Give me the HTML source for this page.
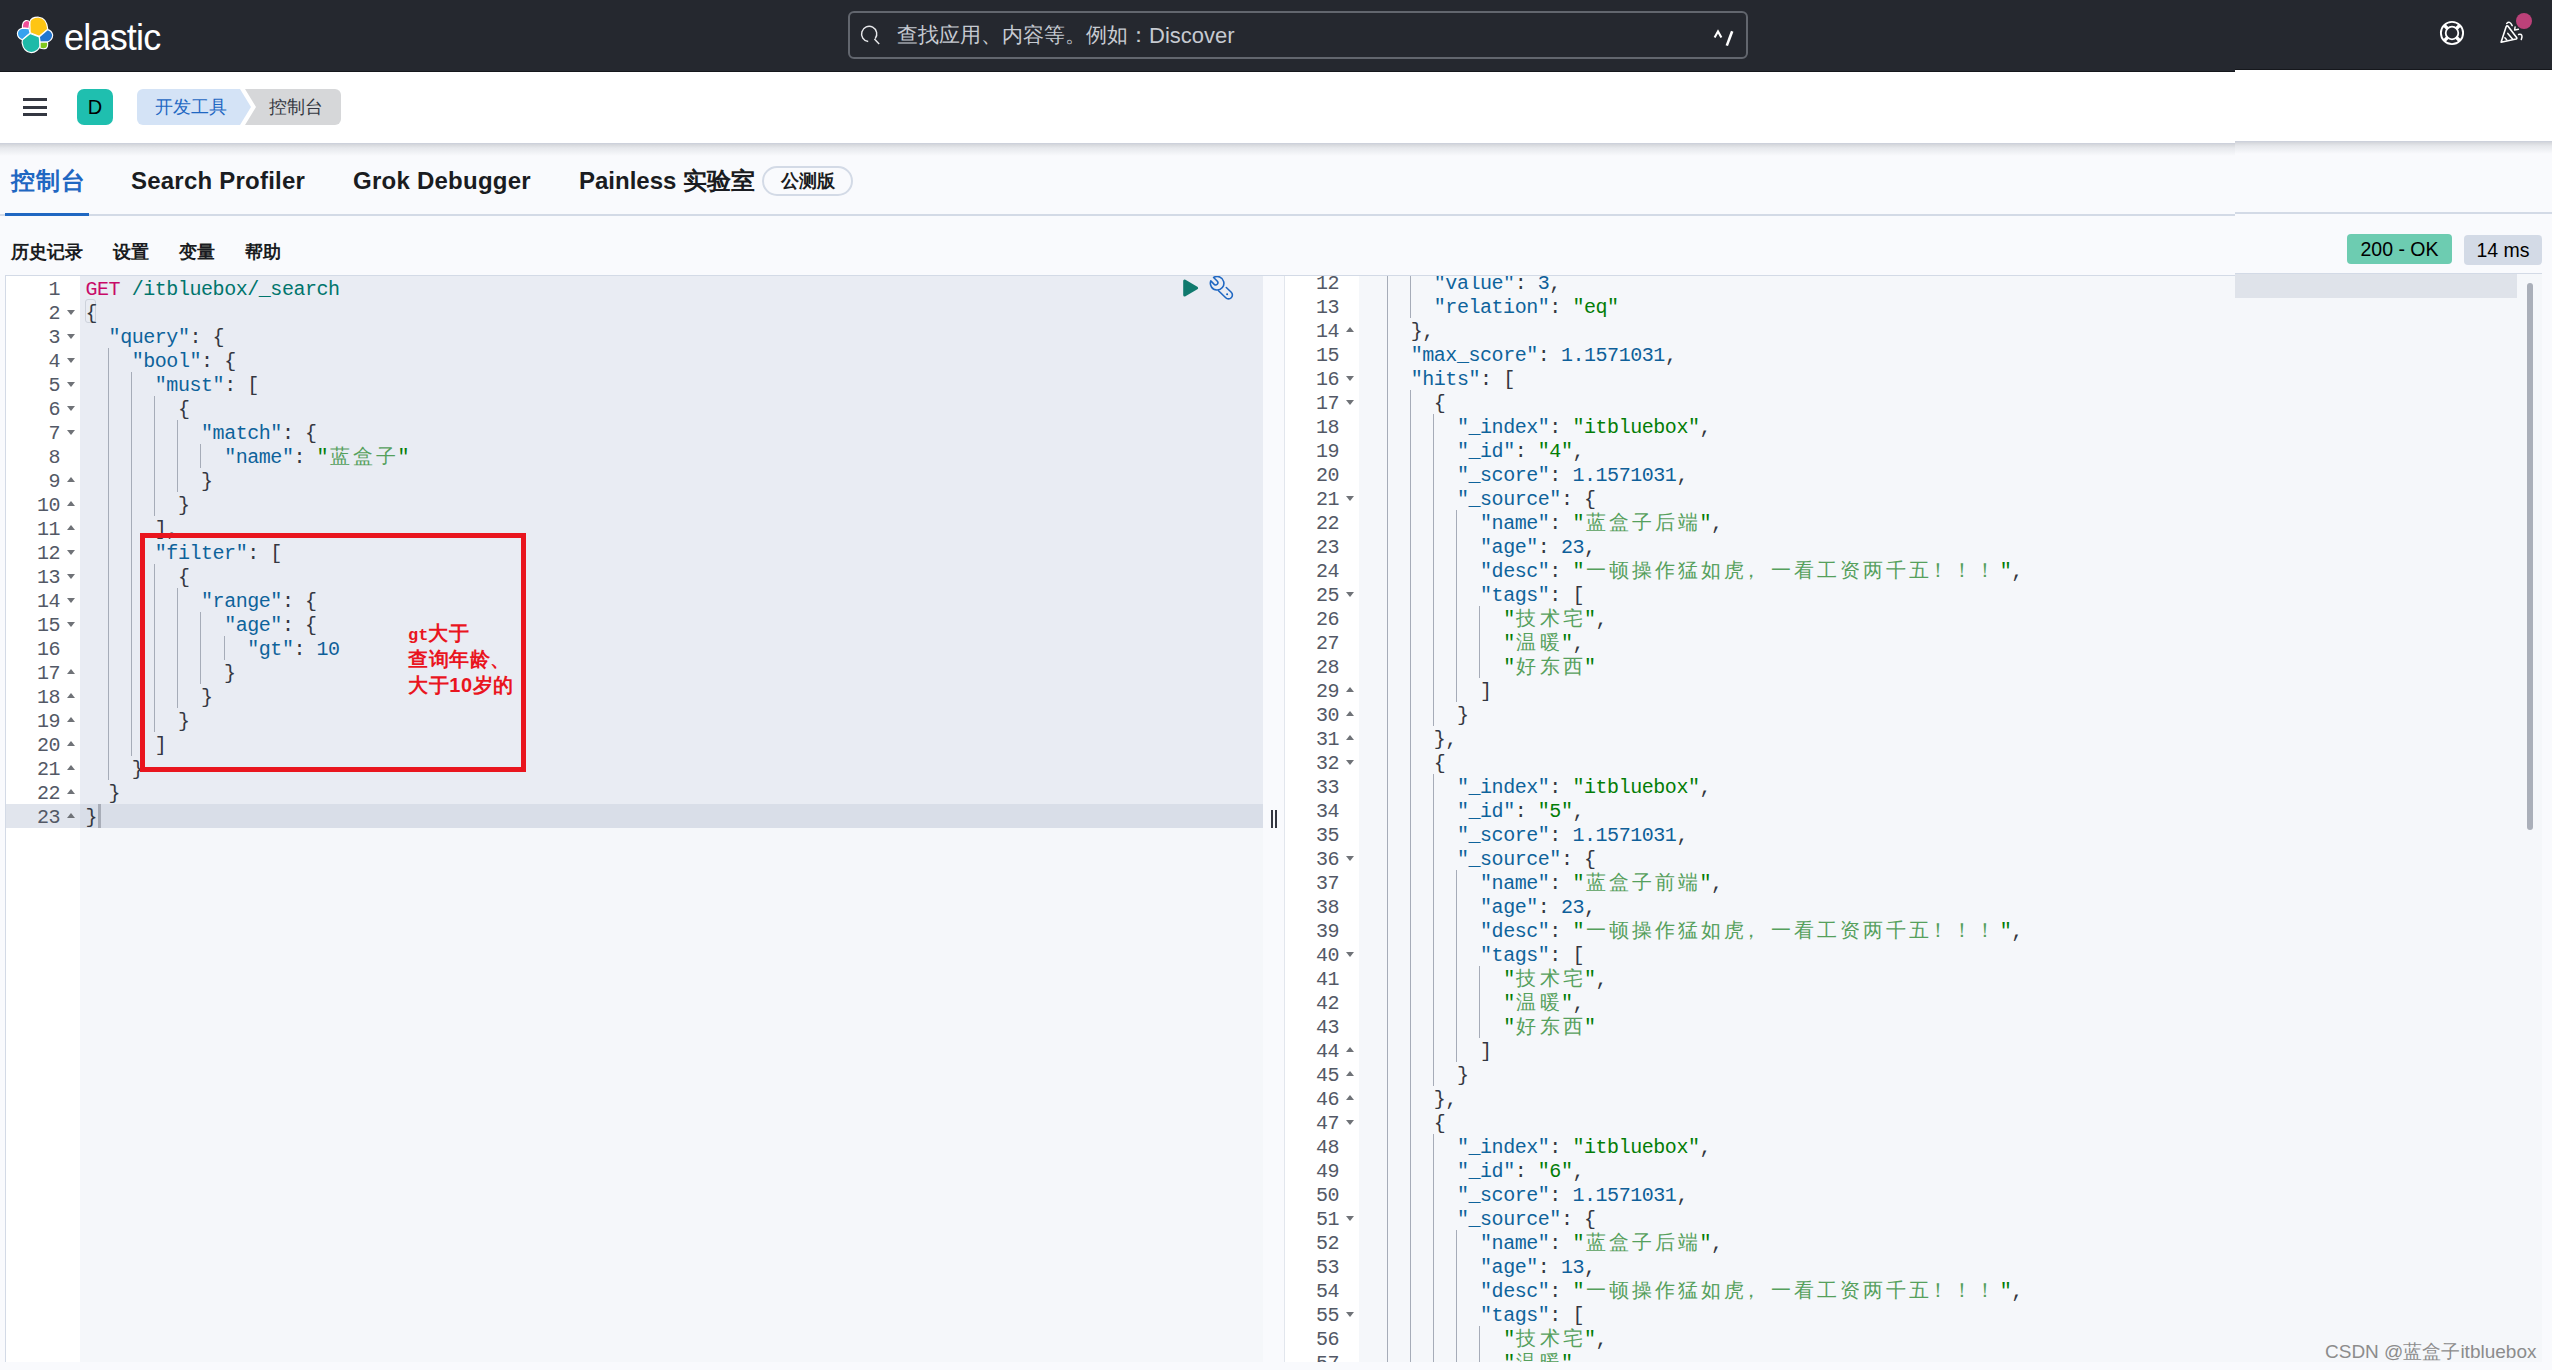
<!DOCTYPE html>
<html><head><meta charset="utf-8"><title>Console - Dev Tools</title>
<style>
*{box-sizing:border-box;margin:0;padding:0}
html,body{width:2552px;height:1370px;overflow:hidden}
body{background:#f9fafd;font-family:"Liberation Sans",sans-serif;position:relative;color:#1a1c21}
.abs{position:absolute}
/* header */
#hdr{position:absolute;left:0;top:0;width:2552px;height:72px}
.hdrbg{position:absolute;left:0;top:0;width:2552px;height:72px;background:#25282f;border-bottom:1px solid #15171c}
.barbg{position:absolute;left:0;top:72px;width:2552px;height:71px;background:#fff}
.shbg{position:absolute;left:0;top:143px;width:2552px;height:13px;background:linear-gradient(#c9ceda 0px,#d8dade 2px,#e6e8ec 5px,#f9fafd 13px)}
.tlbg{position:absolute;left:0;top:214px;width:2552px;height:2px;background:#d3dae6}
.etbg{position:absolute;left:5px;top:275px;width:2537px;height:1px;background:#d3dae6}
#logo-text{position:absolute;left:64px;top:14px;font-size:36px;color:#fff;letter-spacing:-0.8px;line-height:48px}
#search{position:absolute;left:848px;top:11px;width:900px;height:48px;border:2px solid #62666e;border-radius:6px;background:#25282f}
#search .ph{position:absolute;left:47px;top:10px;font-size:21px;line-height:24px;color:#c6cad1;white-space:nowrap}
#search .kb{position:absolute;left:864px;top:12px;font-size:20px;line-height:24px;color:#fff;font-weight:bold}
/* breadcrumb bar */
#bar{position:absolute;left:0;top:72px;width:2552px;height:71px;background:#fff}
#shadow{position:absolute;left:0;top:143px;width:2552px;height:12px;background:linear-gradient(#e3e6ec,#f7f8fc)}
#ham{position:absolute;left:23px;top:98px;width:24px;height:18px}
#ham b{position:absolute;left:0;width:24px;height:3px;background:#343741}
#avatar{position:absolute;left:77px;top:89px;width:36px;height:36px;border-radius:7px;background:#1fbfaf;color:#000;font-size:20px;line-height:36px;text-align:center}
#bc1{position:absolute;left:137px;top:89px;width:114px;height:36px;background:#d4e3f6;border-radius:6px 0 0 6px;clip-path:polygon(0 0,103px 0,114px 18px,103px 36px,0 36px)}
#bc2{position:absolute;left:245px;top:89px;width:96px;height:36px;background:#d6d7d9;border-radius:0 6px 6px 0;clip-path:polygon(0 0,96px 0,96px 36px,0 36px,11px 18px)}
.bct{position:absolute;top:95px;font-size:18px;line-height:24px;white-space:nowrap}
/* tabs */
.tab{position:absolute;top:164.5px;font-size:24px;line-height:32px;font-weight:bold;color:#1a1c21;white-space:nowrap}
#tabline{position:absolute;left:0;top:214px;width:2552px;height:2px;background:#d3dae6}
#tabul{position:absolute;left:5px;top:213px;width:84px;height:3px;background:#1f67c2}
#beta{position:absolute;left:762px;top:166px;width:91px;height:30px;border:2px solid #d3dae6;border-radius:15px;font-size:18px;font-weight:bold;line-height:26px;text-align:center;color:#1a1c21}
.sub{position:absolute;top:240px;font-size:18px;line-height:24px;font-weight:bold;color:#1a1c21;white-space:nowrap}
.badge{position:absolute;height:30px;border-radius:4px;font-size:19.5px;line-height:31px;text-align:center;color:#000}
/* editor */
#edtop{position:absolute;left:5px;top:275px;width:2537px;height:1px;background:#d3dae6}
#ed-left{position:absolute;left:5px;top:276px;width:1258px;height:1086px;background:#f5f7fa;border-left:1px solid #d3dae6;overflow:hidden}
#ed-right{position:absolute;left:1284px;top:276px;width:1258px;height:1086px;background:#f5f7fa;border-left:1px solid #e2e6ed;overflow:hidden}
.gut{position:absolute;left:0;top:0px;width:74px;height:1087px;background:#fff}
.code{position:absolute;top:0px;height:1087px}
.ln{position:absolute;left:0;height:24px;line-height:24px;font-family:"Liberation Mono",monospace;font-size:20px;letter-spacing:-0.45px;white-space:pre;color:#343741}
.gn{position:absolute;right:20px;height:24px;line-height:24px;font-family:"Liberation Mono",monospace;font-size:20px;letter-spacing:-0.45px;color:#535966;text-align:right;width:60px}
.fd,.fu{position:absolute;width:0;height:0;border-left:4px solid transparent;border-right:4px solid transparent}
.fd{border-top:5px solid #6f7277;margin-top:7.5px;margin-left:61px}
.fu{border-bottom:5px solid #6f7277;margin-top:6.5px;margin-left:61px}
.ln .w{display:inline-block;width:23.1px;text-align:center;font-style:normal;color:#55a05c}
.k{color:#0e639b}.s{color:#037d06}.n{color:#0e5f99}.m{color:#c80a68}.u{color:#00756c}
.g{position:absolute;top:-2px;margin-left:-0.6px;width:1px;height:24px;background:#a6acb8}

</style></head>
<body>
<div class="abs" style="left:0;top:0;width:2235px;height:300px;overflow:hidden"><div class="hdrbg"></div><div class="barbg"></div><div class="shbg"></div><div class="tlbg"></div><div class="etbg"></div></div>
<div class="abs" style="left:2235px;top:-2px;width:317px;height:302px;overflow:hidden"><div class="hdrbg" style="left:-2235px"></div><div class="barbg" style="left:-2235px"></div><div class="shbg" style="left:-2235px"></div><div class="tlbg" style="left:-2235px"></div><div class="etbg" style="left:-2235px;width:2542px"></div></div>
<div id="hdr">
  <svg class="abs" style="left:10px;top:10px" width="50" height="50" viewBox="10 10 50 50" stroke="#fff" stroke-width="1.15" stroke-linejoin="round">
    <path d="M29.8 22.2 Q31 17 38.7 17.2 Q46.8 17.8 47.8 29.3 L39.1 36.4 L30.2 32.8 Z" fill="#fec514"/>
    <path d="M29.8 22.2 Q28.5 20.2 25.8 20.6 Q22.2 21.6 22.4 27.8 L28.9 28.5 Z" fill="#f04e98"/>
    <path d="M22.4 28.2 Q17.6 29.2 17.4 33.5 Q17.6 38.2 22.4 39.8 L30 33.2 L29 28.6 Z" fill="#36a2ef"/>
    <path d="M22.4 39.9 L30.1 33.5 L39.3 36.9 L40 46.3 Q37.5 52.4 31.2 52.6 Q23.6 52 22.1 42.8 Z" fill="#1ebaa8"/>
    <path d="M39.3 36.7 L47.7 29.6 Q51.8 30.6 52.7 35 Q52.4 40.2 47.5 42 L40.1 41.9 Z" fill="#2376d0"/>
    <path d="M40.1 42.2 L47.5 42.1 Q48.3 46.8 45.9 48.4 Q42.8 49.2 40.1 48 Z" fill="#80c81e"/>
  </svg>
  <div id="logo-text">elastic</div>
  <div id="search">
    <svg class="abs" style="left:8px;top:10px" width="26" height="26" viewBox="858 23 26 26" fill="none" stroke="#e8e9ec" stroke-width="1.45"><path d="M875.2 38.6 A7.6 7.6 0 1 0 868.2 41.5"/><path d="M874.4 38.9 L879.2 43.9"/></svg>
    <div class="ph">查找应用、内容等。例如：<span style="font-size:22px;position:relative;top:0.5px">Discover</span></div>
    <svg class="abs" style="left:862px;top:15px" width="26" height="20" viewBox="1712 28 26 20" fill="none" stroke="#fff" stroke-linecap="butt" stroke-linejoin="miter"><path d="M1714.6 37.6 L1718 31.4 L1721.4 37.6" stroke-width="2.1"/><path d="M1732.2 31.2 L1726.8 45.6" stroke-width="2.6"/></svg>
  </div>
  <svg class="abs" style="left:2430px;top:0" width="122" height="72" viewBox="2430 0 122 72" fill="none" stroke="#fff" stroke-linecap="round" stroke-linejoin="round">
    <circle cx="2452" cy="33" r="11.1" stroke-width="1.9"/>
    <circle cx="2452" cy="33" r="6.3" stroke-width="1.8"/>
    <path d="M2447.5 28.5 L2444.1 25.1 M2456.5 28.5 L2459.9 25.1 M2447.5 37.5 L2444.1 40.9 M2456.5 37.5 L2459.9 40.9" stroke-width="3.4" stroke-linecap="butt"/>
    <path d="M2501.1 42.2 L2506.2 26.6 Q2507 25.2 2508.2 26.4 L2516.6 37.4 Q2517.3 38.6 2516 39 Z" stroke-width="1.6"/>
    <path d="M2507.8 33.4 L2512.5 38.9 M2504.9 37.7 L2506.7 39.8" stroke-width="1.5"/>
    <path d="M2506.7 23.4 Q2509.7 20.2 2512.2 25.6" stroke-width="1.5"/>
    <path d="M2515.1 26.9 L2514.6 30.1 L2518.4 29.3" stroke-width="1.4"/>
    <path d="M2518.6 34.5 Q2523.6 33.5 2521.3 39.5" stroke-width="1.5"/>
    <circle cx="2524" cy="21" r="8" fill="#bc4179" stroke="none"/>
  </svg>
</div>
<div id="ham"><b style="top:0"></b><b style="top:7.5px"></b><b style="top:15px"></b></div>
<div id="avatar">D</div>
<div id="bc1"></div><div id="bc2"></div>
<div class="bct" style="left:155px;color:#1f67c2">开发工具</div>
<div class="bct" style="left:269px;color:#343741">控制台</div>

<div class="tab" style="left:11px;color:#1f67c2;letter-spacing:1px">控制台</div>
<div class="tab" style="left:131px;letter-spacing:0.22px">Search Profiler</div>
<div class="tab" style="left:353px;letter-spacing:0.25px">Grok Debugger</div>
<div class="tab" style="left:579px">Painless 实验室</div>
<div id="beta">公测版</div>
<div id="tabul"></div>

<div class="sub" style="left:11px">历史记录</div>
<div class="sub" style="left:113px">设置</div>
<div class="sub" style="left:179px">变量</div>
<div class="sub" style="left:245px">帮助</div>
<div class="badge" style="left:2347px;top:234px;width:105px;background:#6dccb1">200 - OK</div>
<div class="badge" style="left:2464px;top:235px;width:78px;background:#d3dae6">14 ms</div>

<div id="ed-left">
  <div class="gut"><div class="abs" style="left:0;top:528px;width:74px;height:24px;background:#e1e5ed"></div><div class="abs" style="left:0;top:2px;width:74px"><div class="gn" style="top:0px">1</div>
<div class="gn" style="top:24px">2</div>
<b class="fd" style="top:24px;left:0px"></b>
<div class="gn" style="top:48px">3</div>
<b class="fd" style="top:48px;left:0px"></b>
<div class="gn" style="top:72px">4</div>
<b class="fd" style="top:72px;left:0px"></b>
<div class="gn" style="top:96px">5</div>
<b class="fd" style="top:96px;left:0px"></b>
<div class="gn" style="top:120px">6</div>
<b class="fd" style="top:120px;left:0px"></b>
<div class="gn" style="top:144px">7</div>
<b class="fd" style="top:144px;left:0px"></b>
<div class="gn" style="top:168px">8</div>
<div class="gn" style="top:192px">9</div>
<b class="fu" style="top:192px;left:0px"></b>
<div class="gn" style="top:216px">10</div>
<b class="fu" style="top:216px;left:0px"></b>
<div class="gn" style="top:240px">11</div>
<b class="fu" style="top:240px;left:0px"></b>
<div class="gn" style="top:264px">12</div>
<b class="fd" style="top:264px;left:0px"></b>
<div class="gn" style="top:288px">13</div>
<b class="fd" style="top:288px;left:0px"></b>
<div class="gn" style="top:312px">14</div>
<b class="fd" style="top:312px;left:0px"></b>
<div class="gn" style="top:336px">15</div>
<b class="fd" style="top:336px;left:0px"></b>
<div class="gn" style="top:360px">16</div>
<div class="gn" style="top:384px">17</div>
<b class="fu" style="top:384px;left:0px"></b>
<div class="gn" style="top:408px">18</div>
<b class="fu" style="top:408px;left:0px"></b>
<div class="gn" style="top:432px">19</div>
<b class="fu" style="top:432px;left:0px"></b>
<div class="gn" style="top:456px">20</div>
<b class="fu" style="top:456px;left:0px"></b>
<div class="gn" style="top:480px">21</div>
<b class="fu" style="top:480px;left:0px"></b>
<div class="gn" style="top:504px">22</div>
<b class="fu" style="top:504px;left:0px"></b>
<div class="gn" style="top:528px">23</div>
<b class="fu" style="top:528px;left:0px"></b></div></div>
  <div class="code" style="left:74px;width:1184px">
    <div class="abs" style="left:0;top:0;width:1184px;height:528px;background:#e9ecf3"></div><div class="abs" style="left:5px;top:23px;width:11px;height:24px;border:1px solid #cdd2db;border-radius:3px"></div>
    <div class="abs" style="left:0;top:528px;width:1184px;height:24px;background:#d9dee8"></div>
  </div>
  <div class="code" style="left:79.5px;top:2px;width:1178px"><div class="ln" style="top:0px"><span class="m">GET</span> <span class="u">/itbluebox/_search</span></div>
<div class="ln" style="top:24px">{</div>
<div class="ln" style="top:48px">  <span class="k">&quot;query&quot;</span>: {</div>
<div class="ln" style="top:72px"><b class="g" style="left:23.10px"></b>    <span class="k">&quot;bool&quot;</span>: {</div>
<div class="ln" style="top:96px"><b class="g" style="left:23.10px"></b><b class="g" style="left:46.20px"></b>      <span class="k">&quot;must&quot;</span>: [</div>
<div class="ln" style="top:120px"><b class="g" style="left:23.10px"></b><b class="g" style="left:46.20px"></b><b class="g" style="left:69.30px"></b>        {</div>
<div class="ln" style="top:144px"><b class="g" style="left:23.10px"></b><b class="g" style="left:46.20px"></b><b class="g" style="left:69.30px"></b><b class="g" style="left:92.40px"></b>          <span class="k">&quot;match&quot;</span>: {</div>
<div class="ln" style="top:168px"><b class="g" style="left:23.10px"></b><b class="g" style="left:46.20px"></b><b class="g" style="left:69.30px"></b><b class="g" style="left:92.40px"></b><b class="g" style="left:115.50px"></b>            <span class="k">&quot;name&quot;</span>: <span class="s">&quot;<i class="w">蓝</i><i class="w">盒</i><i class="w">子</i>&quot;</span></div>
<div class="ln" style="top:192px"><b class="g" style="left:23.10px"></b><b class="g" style="left:46.20px"></b><b class="g" style="left:69.30px"></b><b class="g" style="left:92.40px"></b>          }</div>
<div class="ln" style="top:216px"><b class="g" style="left:23.10px"></b><b class="g" style="left:46.20px"></b><b class="g" style="left:69.30px"></b>        }</div>
<div class="ln" style="top:240px"><b class="g" style="left:23.10px"></b><b class="g" style="left:46.20px"></b>      ],</div>
<div class="ln" style="top:264px"><b class="g" style="left:23.10px"></b><b class="g" style="left:46.20px"></b>      <span class="k">&quot;filter&quot;</span>: [</div>
<div class="ln" style="top:288px"><b class="g" style="left:23.10px"></b><b class="g" style="left:46.20px"></b><b class="g" style="left:69.30px"></b>        {</div>
<div class="ln" style="top:312px"><b class="g" style="left:23.10px"></b><b class="g" style="left:46.20px"></b><b class="g" style="left:69.30px"></b><b class="g" style="left:92.40px"></b>          <span class="k">&quot;range&quot;</span>: {</div>
<div class="ln" style="top:336px"><b class="g" style="left:23.10px"></b><b class="g" style="left:46.20px"></b><b class="g" style="left:69.30px"></b><b class="g" style="left:92.40px"></b><b class="g" style="left:115.50px"></b>            <span class="k">&quot;age&quot;</span>: {</div>
<div class="ln" style="top:360px"><b class="g" style="left:23.10px"></b><b class="g" style="left:46.20px"></b><b class="g" style="left:69.30px"></b><b class="g" style="left:92.40px"></b><b class="g" style="left:115.50px"></b><b class="g" style="left:138.60px"></b>              <span class="k">&quot;gt&quot;</span>: <span class="n">10</span></div>
<div class="ln" style="top:384px"><b class="g" style="left:23.10px"></b><b class="g" style="left:46.20px"></b><b class="g" style="left:69.30px"></b><b class="g" style="left:92.40px"></b><b class="g" style="left:115.50px"></b>            }</div>
<div class="ln" style="top:408px"><b class="g" style="left:23.10px"></b><b class="g" style="left:46.20px"></b><b class="g" style="left:69.30px"></b><b class="g" style="left:92.40px"></b>          }</div>
<div class="ln" style="top:432px"><b class="g" style="left:23.10px"></b><b class="g" style="left:46.20px"></b><b class="g" style="left:69.30px"></b>        }</div>
<div class="ln" style="top:456px"><b class="g" style="left:23.10px"></b><b class="g" style="left:46.20px"></b>      ]</div>
<div class="ln" style="top:480px"><b class="g" style="left:23.10px"></b>    }</div>
<div class="ln" style="top:504px">  }</div>
<div class="ln" style="top:528px">}</div></div>
  <div class="abs" style="left:92px;top:528px;width:3px;height:24px;background:#a8adb8"></div>
  <svg class="abs" style="left:1174px;top:-1px" width="24" height="26" viewBox="0 0 24 26"><path d="M4.7 6 L4.7 20 L16.6 13 Z" fill="#107a6e" stroke="#107a6e" stroke-width="3" stroke-linejoin="round"/></svg>
  <svg class="abs" style="left:1198px;top:-4px" width="40" height="30" viewBox="1204 272 40 30" fill="none" stroke="#1f67c2" stroke-width="1.6" stroke-linejoin="round" stroke-linecap="round">
    <path d="M1210.8 280.9 L1214.25 284.35 A2.2 2.2 0 0 0 1217.35 281.25 L1213.6 277.5 A6.75 6.75 0 1 1 1210.8 280.9 Z"/>
    <path d="M1218.5 290.7 L1225.74 297.76 A3.9 3.9 0 0 0 1231.26 292.24 L1226.3 287.5"/>
    <circle cx="1227.1" cy="294.2" r="1" fill="#0b5ec0" stroke="none"/>
  </svg>
</div>
<div class="abs" style="left:1270.8px;top:810px;width:1.8px;height:18px;background:#343741"></div>
<div class="abs" style="left:1275.3px;top:810px;width:1.8px;height:18px;background:#343741"></div>

<div id="ed-right">
  <div class="gut"><div class="abs" style="left:0;top:-4px;width:74px"><div class="gn" style="top:0px">12</div>
<div class="gn" style="top:24px">13</div>
<div class="gn" style="top:48px">14</div>
<b class="fu" style="top:48px;left:0px"></b>
<div class="gn" style="top:72px">15</div>
<div class="gn" style="top:96px">16</div>
<b class="fd" style="top:96px;left:0px"></b>
<div class="gn" style="top:120px">17</div>
<b class="fd" style="top:120px;left:0px"></b>
<div class="gn" style="top:144px">18</div>
<div class="gn" style="top:168px">19</div>
<div class="gn" style="top:192px">20</div>
<div class="gn" style="top:216px">21</div>
<b class="fd" style="top:216px;left:0px"></b>
<div class="gn" style="top:240px">22</div>
<div class="gn" style="top:264px">23</div>
<div class="gn" style="top:288px">24</div>
<div class="gn" style="top:312px">25</div>
<b class="fd" style="top:312px;left:0px"></b>
<div class="gn" style="top:336px">26</div>
<div class="gn" style="top:360px">27</div>
<div class="gn" style="top:384px">28</div>
<div class="gn" style="top:408px">29</div>
<b class="fu" style="top:408px;left:0px"></b>
<div class="gn" style="top:432px">30</div>
<b class="fu" style="top:432px;left:0px"></b>
<div class="gn" style="top:456px">31</div>
<b class="fu" style="top:456px;left:0px"></b>
<div class="gn" style="top:480px">32</div>
<b class="fd" style="top:480px;left:0px"></b>
<div class="gn" style="top:504px">33</div>
<div class="gn" style="top:528px">34</div>
<div class="gn" style="top:552px">35</div>
<div class="gn" style="top:576px">36</div>
<b class="fd" style="top:576px;left:0px"></b>
<div class="gn" style="top:600px">37</div>
<div class="gn" style="top:624px">38</div>
<div class="gn" style="top:648px">39</div>
<div class="gn" style="top:672px">40</div>
<b class="fd" style="top:672px;left:0px"></b>
<div class="gn" style="top:696px">41</div>
<div class="gn" style="top:720px">42</div>
<div class="gn" style="top:744px">43</div>
<div class="gn" style="top:768px">44</div>
<b class="fu" style="top:768px;left:0px"></b>
<div class="gn" style="top:792px">45</div>
<b class="fu" style="top:792px;left:0px"></b>
<div class="gn" style="top:816px">46</div>
<b class="fu" style="top:816px;left:0px"></b>
<div class="gn" style="top:840px">47</div>
<b class="fd" style="top:840px;left:0px"></b>
<div class="gn" style="top:864px">48</div>
<div class="gn" style="top:888px">49</div>
<div class="gn" style="top:912px">50</div>
<div class="gn" style="top:936px">51</div>
<b class="fd" style="top:936px;left:0px"></b>
<div class="gn" style="top:960px">52</div>
<div class="gn" style="top:984px">53</div>
<div class="gn" style="top:1008px">54</div>
<div class="gn" style="top:1032px">55</div>
<b class="fd" style="top:1032px;left:0px"></b>
<div class="gn" style="top:1056px">56</div>
<div class="gn" style="top:1080px">57</div></div></div>
  <div class="code" style="left:79.5px;top:-4px;width:1178px"><div class="ln" style="top:0px"><b class="g" style="left:23.10px"></b><b class="g" style="left:46.20px"></b>      <span class="k">&quot;value&quot;</span>: <span class="n">3</span>,</div>
<div class="ln" style="top:24px"><b class="g" style="left:23.10px"></b><b class="g" style="left:46.20px"></b>      <span class="k">&quot;relation&quot;</span>: <span class="s">&quot;eq&quot;</span></div>
<div class="ln" style="top:48px"><b class="g" style="left:23.10px"></b>    },</div>
<div class="ln" style="top:72px"><b class="g" style="left:23.10px"></b>    <span class="k">&quot;max_score&quot;</span>: <span class="n">1.1571031</span>,</div>
<div class="ln" style="top:96px"><b class="g" style="left:23.10px"></b>    <span class="k">&quot;hits&quot;</span>: [</div>
<div class="ln" style="top:120px"><b class="g" style="left:23.10px"></b><b class="g" style="left:46.20px"></b>      {</div>
<div class="ln" style="top:144px"><b class="g" style="left:23.10px"></b><b class="g" style="left:46.20px"></b><b class="g" style="left:69.30px"></b>        <span class="k">&quot;_index&quot;</span>: <span class="s">&quot;itbluebox&quot;</span>,</div>
<div class="ln" style="top:168px"><b class="g" style="left:23.10px"></b><b class="g" style="left:46.20px"></b><b class="g" style="left:69.30px"></b>        <span class="k">&quot;_id&quot;</span>: <span class="s">&quot;4&quot;</span>,</div>
<div class="ln" style="top:192px"><b class="g" style="left:23.10px"></b><b class="g" style="left:46.20px"></b><b class="g" style="left:69.30px"></b>        <span class="k">&quot;_score&quot;</span>: <span class="n">1.1571031</span>,</div>
<div class="ln" style="top:216px"><b class="g" style="left:23.10px"></b><b class="g" style="left:46.20px"></b><b class="g" style="left:69.30px"></b>        <span class="k">&quot;_source&quot;</span>: {</div>
<div class="ln" style="top:240px"><b class="g" style="left:23.10px"></b><b class="g" style="left:46.20px"></b><b class="g" style="left:69.30px"></b><b class="g" style="left:92.40px"></b>          <span class="k">&quot;name&quot;</span>: <span class="s">&quot;<i class="w">蓝</i><i class="w">盒</i><i class="w">子</i><i class="w">后</i><i class="w">端</i>&quot;</span>,</div>
<div class="ln" style="top:264px"><b class="g" style="left:23.10px"></b><b class="g" style="left:46.20px"></b><b class="g" style="left:69.30px"></b><b class="g" style="left:92.40px"></b>          <span class="k">&quot;age&quot;</span>: <span class="n">23</span>,</div>
<div class="ln" style="top:288px"><b class="g" style="left:23.10px"></b><b class="g" style="left:46.20px"></b><b class="g" style="left:69.30px"></b><b class="g" style="left:92.40px"></b>          <span class="k">&quot;desc&quot;</span>: <span class="s">&quot;<i class="w">一</i><i class="w">顿</i><i class="w">操</i><i class="w">作</i><i class="w">猛</i><i class="w">如</i><i class="w">虎</i><i class="w" style="text-align:left;text-indent:-5px">，</i><i class="w">一</i><i class="w">看</i><i class="w">工</i><i class="w">资</i><i class="w">两</i><i class="w">千</i><i class="w">五</i><i class="w" style="text-align:left;text-indent:-2px">！</i><i class="w" style="text-align:left;text-indent:-2px">！</i><i class="w" style="text-align:left;text-indent:-2px">！</i>&quot;</span>,</div>
<div class="ln" style="top:312px"><b class="g" style="left:23.10px"></b><b class="g" style="left:46.20px"></b><b class="g" style="left:69.30px"></b><b class="g" style="left:92.40px"></b>          <span class="k">&quot;tags&quot;</span>: [</div>
<div class="ln" style="top:336px"><b class="g" style="left:23.10px"></b><b class="g" style="left:46.20px"></b><b class="g" style="left:69.30px"></b><b class="g" style="left:92.40px"></b><b class="g" style="left:115.50px"></b>            <span class="s">&quot;<i class="w">技</i><i class="w">术</i><i class="w">宅</i>&quot;</span>,</div>
<div class="ln" style="top:360px"><b class="g" style="left:23.10px"></b><b class="g" style="left:46.20px"></b><b class="g" style="left:69.30px"></b><b class="g" style="left:92.40px"></b><b class="g" style="left:115.50px"></b>            <span class="s">&quot;<i class="w">温</i><i class="w">暖</i>&quot;</span>,</div>
<div class="ln" style="top:384px"><b class="g" style="left:23.10px"></b><b class="g" style="left:46.20px"></b><b class="g" style="left:69.30px"></b><b class="g" style="left:92.40px"></b><b class="g" style="left:115.50px"></b>            <span class="s">&quot;<i class="w">好</i><i class="w">东</i><i class="w">西</i>&quot;</span></div>
<div class="ln" style="top:408px"><b class="g" style="left:23.10px"></b><b class="g" style="left:46.20px"></b><b class="g" style="left:69.30px"></b><b class="g" style="left:92.40px"></b>          ]</div>
<div class="ln" style="top:432px"><b class="g" style="left:23.10px"></b><b class="g" style="left:46.20px"></b><b class="g" style="left:69.30px"></b>        }</div>
<div class="ln" style="top:456px"><b class="g" style="left:23.10px"></b><b class="g" style="left:46.20px"></b>      },</div>
<div class="ln" style="top:480px"><b class="g" style="left:23.10px"></b><b class="g" style="left:46.20px"></b>      {</div>
<div class="ln" style="top:504px"><b class="g" style="left:23.10px"></b><b class="g" style="left:46.20px"></b><b class="g" style="left:69.30px"></b>        <span class="k">&quot;_index&quot;</span>: <span class="s">&quot;itbluebox&quot;</span>,</div>
<div class="ln" style="top:528px"><b class="g" style="left:23.10px"></b><b class="g" style="left:46.20px"></b><b class="g" style="left:69.30px"></b>        <span class="k">&quot;_id&quot;</span>: <span class="s">&quot;5&quot;</span>,</div>
<div class="ln" style="top:552px"><b class="g" style="left:23.10px"></b><b class="g" style="left:46.20px"></b><b class="g" style="left:69.30px"></b>        <span class="k">&quot;_score&quot;</span>: <span class="n">1.1571031</span>,</div>
<div class="ln" style="top:576px"><b class="g" style="left:23.10px"></b><b class="g" style="left:46.20px"></b><b class="g" style="left:69.30px"></b>        <span class="k">&quot;_source&quot;</span>: {</div>
<div class="ln" style="top:600px"><b class="g" style="left:23.10px"></b><b class="g" style="left:46.20px"></b><b class="g" style="left:69.30px"></b><b class="g" style="left:92.40px"></b>          <span class="k">&quot;name&quot;</span>: <span class="s">&quot;<i class="w">蓝</i><i class="w">盒</i><i class="w">子</i><i class="w">前</i><i class="w">端</i>&quot;</span>,</div>
<div class="ln" style="top:624px"><b class="g" style="left:23.10px"></b><b class="g" style="left:46.20px"></b><b class="g" style="left:69.30px"></b><b class="g" style="left:92.40px"></b>          <span class="k">&quot;age&quot;</span>: <span class="n">23</span>,</div>
<div class="ln" style="top:648px"><b class="g" style="left:23.10px"></b><b class="g" style="left:46.20px"></b><b class="g" style="left:69.30px"></b><b class="g" style="left:92.40px"></b>          <span class="k">&quot;desc&quot;</span>: <span class="s">&quot;<i class="w">一</i><i class="w">顿</i><i class="w">操</i><i class="w">作</i><i class="w">猛</i><i class="w">如</i><i class="w">虎</i><i class="w" style="text-align:left;text-indent:-5px">，</i><i class="w">一</i><i class="w">看</i><i class="w">工</i><i class="w">资</i><i class="w">两</i><i class="w">千</i><i class="w">五</i><i class="w" style="text-align:left;text-indent:-2px">！</i><i class="w" style="text-align:left;text-indent:-2px">！</i><i class="w" style="text-align:left;text-indent:-2px">！</i>&quot;</span>,</div>
<div class="ln" style="top:672px"><b class="g" style="left:23.10px"></b><b class="g" style="left:46.20px"></b><b class="g" style="left:69.30px"></b><b class="g" style="left:92.40px"></b>          <span class="k">&quot;tags&quot;</span>: [</div>
<div class="ln" style="top:696px"><b class="g" style="left:23.10px"></b><b class="g" style="left:46.20px"></b><b class="g" style="left:69.30px"></b><b class="g" style="left:92.40px"></b><b class="g" style="left:115.50px"></b>            <span class="s">&quot;<i class="w">技</i><i class="w">术</i><i class="w">宅</i>&quot;</span>,</div>
<div class="ln" style="top:720px"><b class="g" style="left:23.10px"></b><b class="g" style="left:46.20px"></b><b class="g" style="left:69.30px"></b><b class="g" style="left:92.40px"></b><b class="g" style="left:115.50px"></b>            <span class="s">&quot;<i class="w">温</i><i class="w">暖</i>&quot;</span>,</div>
<div class="ln" style="top:744px"><b class="g" style="left:23.10px"></b><b class="g" style="left:46.20px"></b><b class="g" style="left:69.30px"></b><b class="g" style="left:92.40px"></b><b class="g" style="left:115.50px"></b>            <span class="s">&quot;<i class="w">好</i><i class="w">东</i><i class="w">西</i>&quot;</span></div>
<div class="ln" style="top:768px"><b class="g" style="left:23.10px"></b><b class="g" style="left:46.20px"></b><b class="g" style="left:69.30px"></b><b class="g" style="left:92.40px"></b>          ]</div>
<div class="ln" style="top:792px"><b class="g" style="left:23.10px"></b><b class="g" style="left:46.20px"></b><b class="g" style="left:69.30px"></b>        }</div>
<div class="ln" style="top:816px"><b class="g" style="left:23.10px"></b><b class="g" style="left:46.20px"></b>      },</div>
<div class="ln" style="top:840px"><b class="g" style="left:23.10px"></b><b class="g" style="left:46.20px"></b>      {</div>
<div class="ln" style="top:864px"><b class="g" style="left:23.10px"></b><b class="g" style="left:46.20px"></b><b class="g" style="left:69.30px"></b>        <span class="k">&quot;_index&quot;</span>: <span class="s">&quot;itbluebox&quot;</span>,</div>
<div class="ln" style="top:888px"><b class="g" style="left:23.10px"></b><b class="g" style="left:46.20px"></b><b class="g" style="left:69.30px"></b>        <span class="k">&quot;_id&quot;</span>: <span class="s">&quot;6&quot;</span>,</div>
<div class="ln" style="top:912px"><b class="g" style="left:23.10px"></b><b class="g" style="left:46.20px"></b><b class="g" style="left:69.30px"></b>        <span class="k">&quot;_score&quot;</span>: <span class="n">1.1571031</span>,</div>
<div class="ln" style="top:936px"><b class="g" style="left:23.10px"></b><b class="g" style="left:46.20px"></b><b class="g" style="left:69.30px"></b>        <span class="k">&quot;_source&quot;</span>: {</div>
<div class="ln" style="top:960px"><b class="g" style="left:23.10px"></b><b class="g" style="left:46.20px"></b><b class="g" style="left:69.30px"></b><b class="g" style="left:92.40px"></b>          <span class="k">&quot;name&quot;</span>: <span class="s">&quot;<i class="w">蓝</i><i class="w">盒</i><i class="w">子</i><i class="w">后</i><i class="w">端</i>&quot;</span>,</div>
<div class="ln" style="top:984px"><b class="g" style="left:23.10px"></b><b class="g" style="left:46.20px"></b><b class="g" style="left:69.30px"></b><b class="g" style="left:92.40px"></b>          <span class="k">&quot;age&quot;</span>: <span class="n">13</span>,</div>
<div class="ln" style="top:1008px"><b class="g" style="left:23.10px"></b><b class="g" style="left:46.20px"></b><b class="g" style="left:69.30px"></b><b class="g" style="left:92.40px"></b>          <span class="k">&quot;desc&quot;</span>: <span class="s">&quot;<i class="w">一</i><i class="w">顿</i><i class="w">操</i><i class="w">作</i><i class="w">猛</i><i class="w">如</i><i class="w">虎</i><i class="w" style="text-align:left;text-indent:-5px">，</i><i class="w">一</i><i class="w">看</i><i class="w">工</i><i class="w">资</i><i class="w">两</i><i class="w">千</i><i class="w">五</i><i class="w" style="text-align:left;text-indent:-2px">！</i><i class="w" style="text-align:left;text-indent:-2px">！</i><i class="w" style="text-align:left;text-indent:-2px">！</i>&quot;</span>,</div>
<div class="ln" style="top:1032px"><b class="g" style="left:23.10px"></b><b class="g" style="left:46.20px"></b><b class="g" style="left:69.30px"></b><b class="g" style="left:92.40px"></b>          <span class="k">&quot;tags&quot;</span>: [</div>
<div class="ln" style="top:1056px"><b class="g" style="left:23.10px"></b><b class="g" style="left:46.20px"></b><b class="g" style="left:69.30px"></b><b class="g" style="left:92.40px"></b><b class="g" style="left:115.50px"></b>            <span class="s">&quot;<i class="w">技</i><i class="w">术</i><i class="w">宅</i>&quot;</span>,</div>
<div class="ln" style="top:1080px"><b class="g" style="left:23.10px"></b><b class="g" style="left:46.20px"></b><b class="g" style="left:69.30px"></b><b class="g" style="left:92.40px"></b><b class="g" style="left:115.50px"></b>            <span class="s">&quot;<i class="w">温</i><i class="w">暖</i>&quot;</span>,</div></div>
</div>
<div class="abs" style="left:2235px;top:274px;width:307px;height:26px;background:#f5f7fa"></div><div class="abs" style="left:2235px;top:274px;width:282px;height:24px;background:#dfe3ea"></div>
<div class="abs" style="left:2527px;top:283px;width:6px;height:547px;border-radius:3px;background:#aaafb9"></div>

<div class="abs" style="left:140px;top:533px;width:386px;height:239px;border:5px solid #e9151e"></div>
<div class="abs" style="left:408px;top:620px;width:120px;font-size:20px;line-height:26px;font-weight:bold;color:#e9151e;white-space:nowrap;letter-spacing:0.6px"><div style="height:26px;line-height:26px"><span style="font-family:'Liberation Mono',monospace;font-size:17px;letter-spacing:0;line-height:0">gt</span>大于</div><div style="height:26px;margin-top:-0.5px">查询年龄、</div><div style="height:26px;margin-top:0.5px">大于10岁的</div></div>

<div class="abs" style="left:2325px;top:1340px;font-size:19px;line-height:24px;color:#8c8c8c;white-space:nowrap">CSDN @蓝盒子itbluebox</div>

</body></html>
